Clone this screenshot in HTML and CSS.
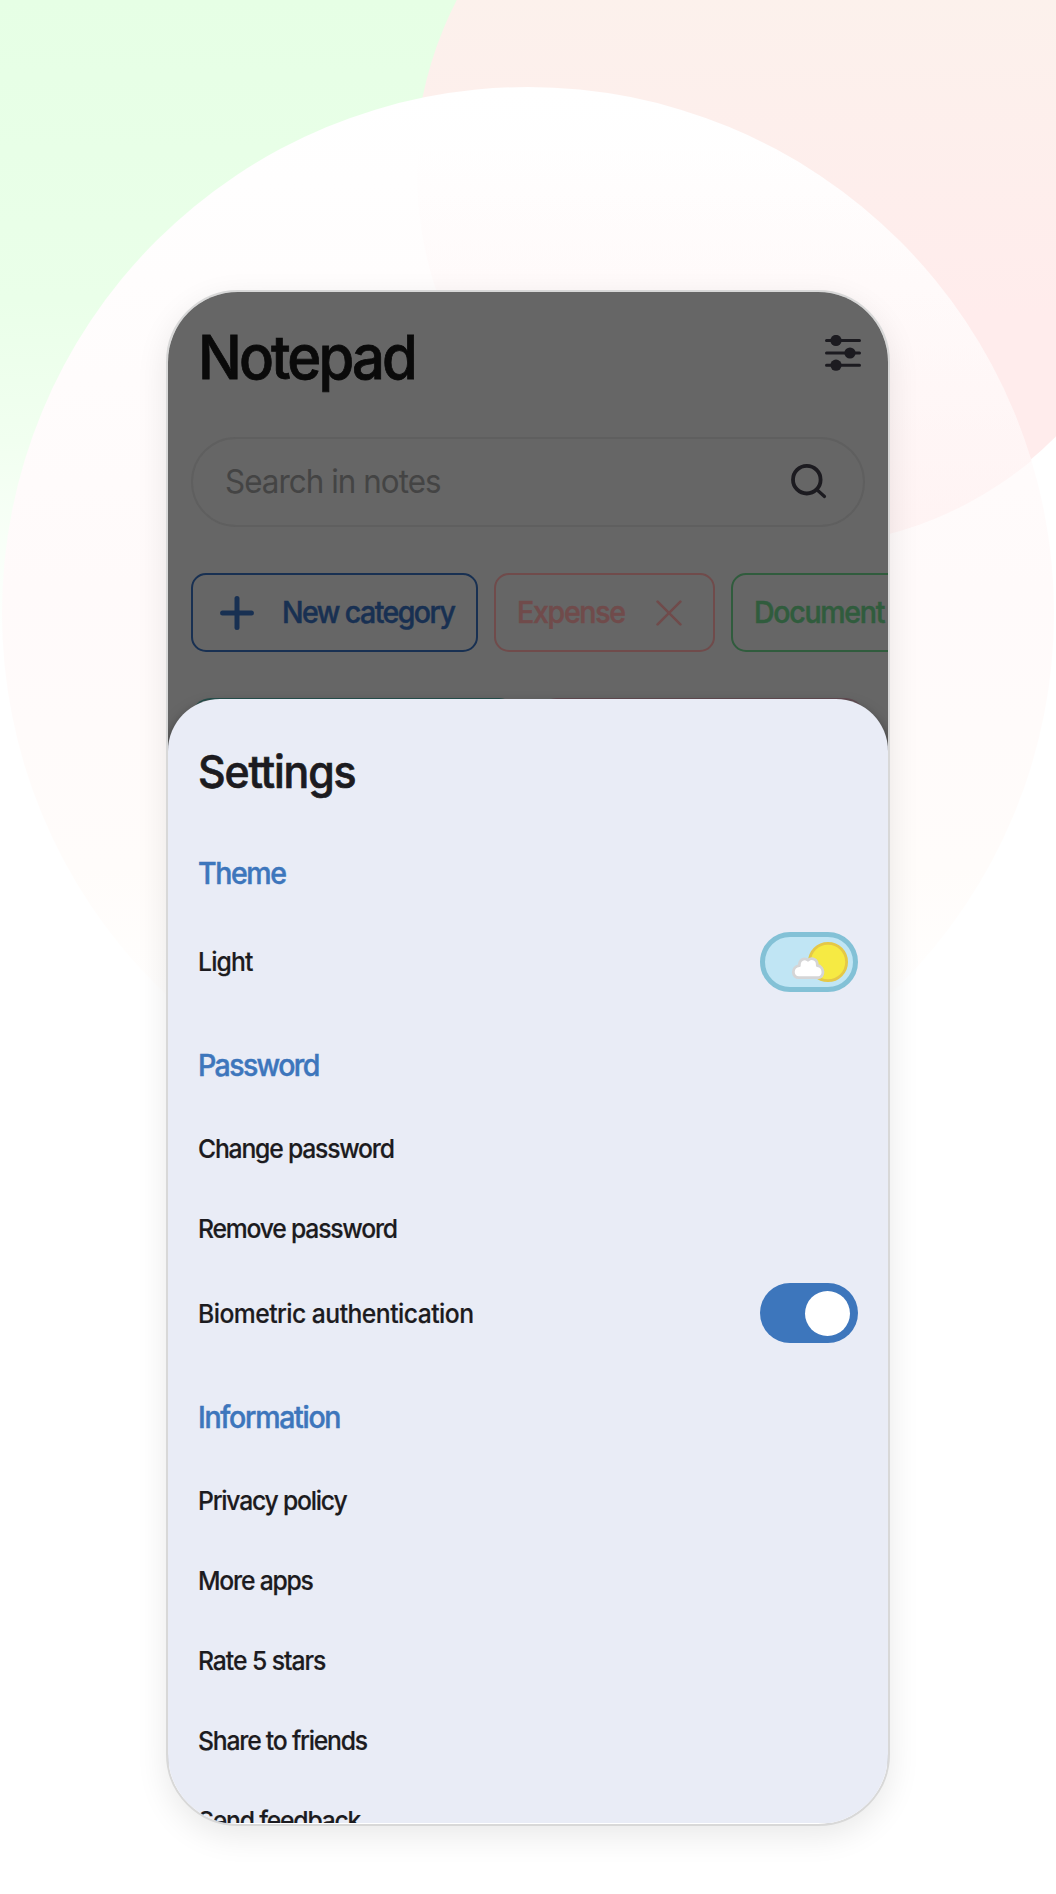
FILE: index.html
```html
<!DOCTYPE html>
<html lang="en">
<head>
<meta charset="utf-8">
<title>Notepad</title>
<link rel="stylesheet" href="styles.css">
</head>
<body>
<div class="stage">
  <div class="blob blob-pink"></div>
  <div class="blob blob-white"><div class="blob blob-tint"></div></div>
  <main class="phone">
    <section class="app">
      <header class="header">
        <h1 class="title">Notepad</h1>
        <svg class="tune" viewBox="0 0 36 36"><path d="M1.500 5.500h33M1.500 18h33M1.500 30.200h33" fill="none" stroke="currentColor" stroke-width="3" stroke-linecap="round"/><circle cx="11" cy="5.500" r="5.600"/><circle cx="25" cy="18" r="5.600"/><circle cx="11" cy="30.200" r="5.600"/></svg>
      </header>
      <div class="search">
        <span class="placeholder">Search in notes</span>
        <svg class="lens" viewBox="0 0 36 36" fill="none" stroke="currentColor" stroke-linecap="round"><circle cx="15.800" cy="15.700" r="13.800" stroke-width="3.800"/><path d="M26.500 26.200l7 6.300" stroke-width="3.200"/></svg>
      </div>
      <div class="chips">
        <div class="chip chip-new">
          <svg class="plus" viewBox="0 0 34 34"><path d="M17 2.600v28.800M2.600 17h28.800" stroke="currentColor" stroke-width="5" stroke-linecap="round"/></svg>
          <span>New category</span>
        </div>
        <div class="chip chip-expense">
          <span>Expense</span>
          <svg class="cross" viewBox="0 0 26 26"><path d="M1.600 1.600l22.800 22.800M24.400 1.600L1.600 24.400" stroke="currentColor" stroke-width="2.600" stroke-linecap="round"/></svg>
        </div>
        <div class="chip chip-doc"><span>Document</span></div>
      </div>
      <div class="notes"><div class="note note-teal"></div><div class="note note-rose"></div></div>
    </section>
    <section class="sheet">
      <h2 class="sheet-title">Settings</h2>
      <h3 class="group">Theme</h3>
      <div class="row row-light"><span class="t-light">Light</span>
        <svg class="day" viewBox="0 0 98 60"><rect x="2.500" y="2.500" width="93" height="55" rx="27.500" fill="#c0e5f4" stroke="#83c1d6" stroke-width="5"/><circle cx="68" cy="30" r="18.600" fill="#f6ea43" stroke="#e5c847" stroke-width="2.800"/><path d="M39 45.700c-7.500 0-7.700-11 .3-12-.2-6.500 5.200-8.400 8.700-5.500 3.800-3.300 9.800-1.200 9.300 5.300 7.500.8 7.200 12.200 1 12.200z" fill="#fff" stroke="#d5d5d6" stroke-width="2.800" stroke-linejoin="round"/></svg>
      </div>
      <h3 class="group t-password">Password</h3>
      <div class="row"><span>Change password</span></div>
      <div class="row"><span>Remove password</span></div>
      <div class="row row-bio"><span class="t-bio">Biometric authentication</span><div class="switch"><div class="knob"></div></div></div>
      <h3 class="group t-info">Information</h3>
      <div class="row"><span>Privacy policy</span></div>
      <div class="row"><span>More apps</span></div>
      <div class="row"><span class="t-rate">Rate 5 stars</span></div>
      <div class="row"><span>Share to friends</span></div>
      <div class="row"><span>Send feedback</span></div>
    </section>
  </main>
</div>
</body>
</html>
```
FILE: styles.css
```css
* { box-sizing: border-box; }
body { margin: 0; background: #fff; font-family: Inter, "Liberation Sans", sans-serif; color: #1c1b20; }
h1, h2, h3 { margin: 0; font-weight: 500; }
svg { display: block; flex: none; }
span { white-space: nowrap; }
/* condensed lettering */
span, h1, h2, h3 { transform: scaleX(.95); transform-origin: 0 50%; }
.stage { position: relative; width: 1056px; height: 1894px; overflow: hidden; padding: 290px 166px 0; background: linear-gradient(180deg, #e6ffe5 0, #eaffe9 300px, #f1fff0 440px, #fff 640px) 0 0 / 600px 100% no-repeat #fff; }
.blob { position: absolute; border-radius: 50%; }
.blob-pink { left: 415px; top: -203px; width: 750px; height: 750px; background: linear-gradient(180deg, #fcf1ec 200px, #ffecec 520px); }
.blob-white { left: 2px; top: 87px; width: 1052px; height: 1052px; overflow: hidden; background: linear-gradient(180deg, #fff 0, #fffdfd 190px, #fffafa 500px, #fffcfa 780px, #fff 980px); }
.blob-tint { left: 415px; top: -290px; width: 750px; height: 750px; background: linear-gradient(180deg, rgba(253, 240, 234, 0) 350px, rgba(255, 236, 236, .5) 740px); }
.phone { position: relative; width: 724px; height: 1536px; border: 2px solid #d8d8d8; border-radius: 72px; background: #fff; overflow: hidden; box-shadow: 0 10px 32px rgba(0, 0, 0, .09); }
.app { height: 467px; background: #666; padding-top: 34px; }
.header { height: 111px; display: flex; justify-content: space-between; padding: 0 27px 0 30px; }
.title { font-size: 61px; line-height: 62px; letter-spacing: -3.05px; color: #0a0a0a; white-space: nowrap; -webkit-text-stroke: .8px; }
.tune { width: 36px; height: 36px; margin-top: 8.500px; fill: currentColor; }
.search { height: 90px; margin: 0 23px; border: 2px solid #5f5f5f; border-radius: 45px; display: flex; align-items: center; justify-content: space-between; padding: 0 36px 0 32px; }
.placeholder { font-size: 33px; letter-spacing: -1px; color: #444; padding-bottom: 2px; }
.lens { width: 36px; height: 36px; margin-bottom: 1px; }
.chips { display: flex; gap: 16px; margin: 46px 0 0 23px; width: 720px; }
.chip { height: 79px; border: 2px solid currentColor; border-radius: 15px; display: flex; align-items: center; flex: none; font-size: 30px; font-weight: 500; letter-spacing: -1.33px; -webkit-text-stroke: .5px; }
.chip span { padding-bottom: 2px; }
.chip-new { width: 287px; color: #183052; padding-left: 27px; gap: 28px; letter-spacing: -1.63px; }
.plus { width: 34px; height: 34px; }
.chip-expense { width: 221px; color: #704b4b; padding-left: 21px; justify-content: space-between; padding-right: 31px; }
.cross { width: 26px; height: 26px; }
.chip-doc { width: 250px; color: #305c3d; padding-left: 21px; }
.notes { display: flex; gap: 18px; padding: 46px 23px 0; }
.note { flex: 1; height: 48px; border-top: 2px solid #27504d; border-radius: 20px 20px 0 0; }
.note-rose { border-color: #634c53; }
.sheet { position: relative; height: 1125px; margin-top: -60px; background: #e9ecf6; border-bottom: 1px solid #fff; border-radius: 52px 52px 0 0; padding: 37px 30px 0; box-shadow: 0 8px 14px rgba(0, 0, 0, .6); overflow: hidden; }
.sheet-title { height: 72px; line-height: 72px; font-size: 45px; letter-spacing: -1.22px; -webkit-text-stroke: .7px; margin-bottom: 23px; }
.group { height: 84px; line-height: 84px; font-size: 30px; color: #3d76bc; letter-spacing: -1.45px; margin-bottom: 1px; -webkit-text-stroke: .5px; }
.t-password { letter-spacing: -1.69px; }
.t-info { letter-spacing: -1.35px; }
.row { height: 80px; display: flex; align-items: center; justify-content: space-between; font-size: 26px; font-weight: 500; letter-spacing: -1.26px; -webkit-text-stroke: .2px; }
.row-light, .row-bio { height: 90px; }
.row-light { margin-bottom: 17px; }
.row-bio { margin-bottom: 17px; }
.t-light { letter-spacing: -.85px; }
.t-bio { letter-spacing: -.56px; }
.t-rate { letter-spacing: -1.1px; }
.day { width: 98px; height: 60px; margin-top: 2px; }
.switch { width: 98px; height: 60px; border-radius: 30px; background: #3d76bc; display: flex; align-items: center; justify-content: flex-end; padding-right: 8px; }
.knob { width: 45px; height: 45px; border-radius: 50%; background: #fff; }
```
